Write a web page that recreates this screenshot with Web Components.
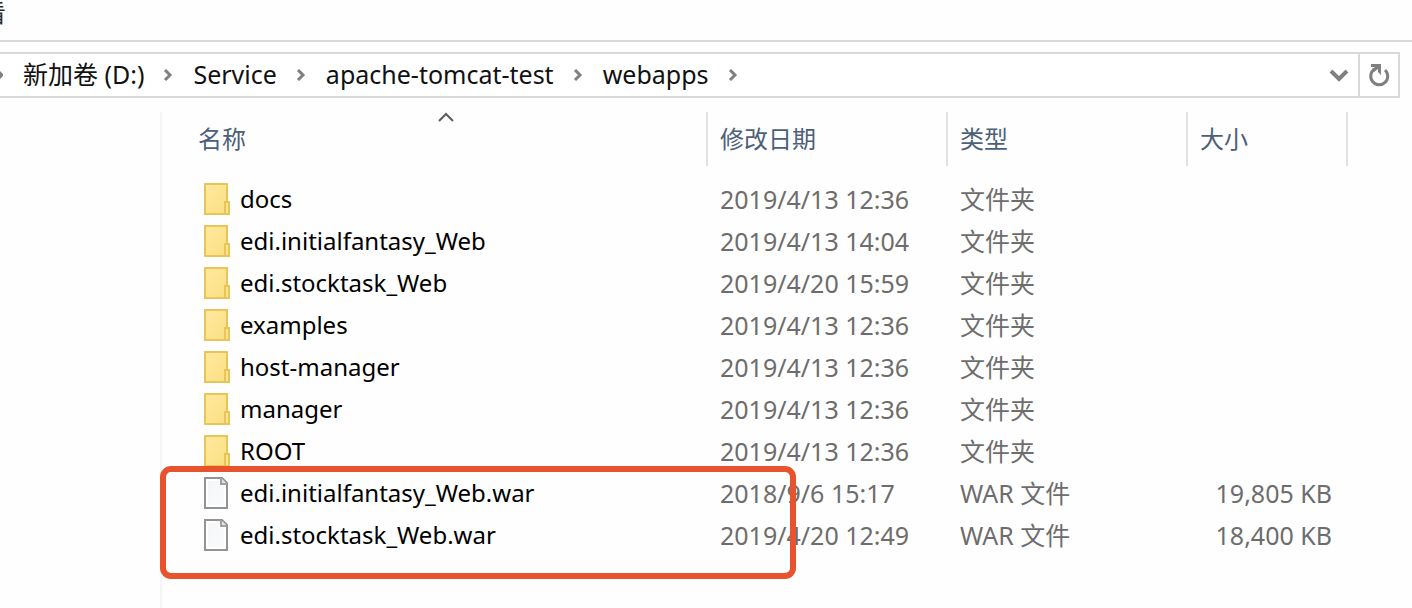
<!DOCTYPE html>
<html lang="zh-CN">
<head>
<meta charset="utf-8">
<title>webapps</title>
<style>
  html, body { height: 100%; }
  body {
    margin: 0;
    background: #fefefe;
    color: #000;
    font: 24px/32px "Noto Sans", "Noto Sans CJK SC", sans-serif;
    overflow: hidden;
  }
</style>
</head>
<body>
<explorer-window>
  <ribbon-tabs slot="ribbon"></ribbon-tabs>
  <address-bar slot="address">
    <path-crumb>新加卷 (D:)</path-crumb>
    <path-crumb>Service</path-crumb>
    <path-crumb>apache-tomcat-test</path-crumb>
    <path-crumb>webapps</path-crumb>
  </address-bar>
  <file-list></file-list>
</explorer-window>

<script>
const define = (name, html, setup) => {
  const template = document.createElement('template');
  template.innerHTML = html;
  customElements.define(name, class extends HTMLElement {
    constructor() {
      super();
      this.attachShadow({ mode: 'open' }).append(template.content.cloneNode(true));
    }
    connectedCallback() { if (setup) setup(this, this.shadowRoot); }
  });
};

define('explorer-window', `
  <style>
    :host { display: flex; flex-direction: column; height: 100%; }
    .address { padding: 10px 12px 14px 0; }
    .body { display: flex; flex: 1; min-height: 0; }
    .nav { flex: 0 0 160px; border-right: 2px solid #f5f5f5; }
    .content { flex: 1; min-width: 0; padding-left: 24px; }
  </style>
  <slot name="ribbon"></slot>
  <div class="address"><slot name="address"></slot></div>
  <div class="body">
    <div class="nav"></div>
    <main class="content"><slot></slot></main>
  </div>`);

define('ribbon-tabs', `
  <style>
    :host { display: flex; height: 40px; border-bottom: 2px solid #d9d9d9; }
    .clip { display: flex; justify-content: flex-end; align-items: flex-start; width: 6px; overflow: hidden; }
    button { flex: none; border: 0; padding: 0; background: none; color: #2b2b2b; font: inherit; line-height: 26px; }
  </style>
  <div class="clip"><button type="button">看</button></div>`);

define('path-crumb', `
  <style>
    :host { display: flex; align-items: center; gap: 19px; white-space: nowrap; }
    a { color: #111; text-decoration: none; padding-bottom: 3px; }
    svg { display: block; }
  </style>
  <a href="#"><slot></slot></a>
  <svg width="10" height="12" viewBox="0 0 10 12" fill="none" stroke="#808080" stroke-width="3"><path d="M2 1l5 5-5 5"/></svg>`);

define('address-bar', `
  <style>
    :host { display: flex; height: 42px; border: 2px solid #d9d9d9; border-left: 0; background: #fff; font-size: 25px; }
    nav { display: flex; flex: 1; align-items: center; gap: 20px; min-width: 0; overflow: hidden; }
    button { display: flex; align-items: center; justify-content: center; border: 0; padding: 0; background: none; }
    .drop { width: 38px; }
    .refresh { width: 40px; box-sizing: border-box; border-left: 2px solid #d9d9d9; }
  </style>
  <nav aria-label="路径">
    <svg width="3" height="12" viewBox="5 0 3 12" fill="none" stroke="#808080" stroke-width="3"><path d="M2 1l5 5-5 5"/></svg>
    <slot></slot>
  </nav>
  <button class="drop" type="button" aria-label="展开">
    <svg width="20" height="14" viewBox="0 0 20 14" fill="none" stroke="#808080" stroke-width="4"><path d="M2 3l8 8 8-8"/></svg>
  </button>
  <button class="refresh" type="button" aria-label="刷新">
    <svg width="22" height="24" viewBox="0 0 22 24" fill="none" stroke="#808080" stroke-width="3"><path d="M6 6.500A8.500 8.500 0 1 0 17 7"/><path d="M3 1H13V12L10 9V6L6 9L4 6L7 4H3Z" fill="#808080" stroke="none"/></svg>
  </button>`);

define('file-icon', `
  <style>
    :host { display: block; width: 26px; height: 32px; }
    svg { display: none; }
    :host([kind="folder"]) .folder, :host([kind="file"]) .file { display: block; }
  </style>
  <svg class="folder" width="26" height="32" viewBox="0 0 26 32">
    <defs><linearGradient id="f" x2="1" y2="1"><stop stop-color="#ffe9a0"/><stop offset="1" stop-color="#fadf80"/></linearGradient></defs>
    <rect x="1" y="1" width="22" height="30" fill="url(#f)" stroke="#e7c558" stroke-width="2"/>
    <rect x="21" y="19" width="4" height="12" fill="#fde58e" stroke="#e7c558" stroke-width="2"/>
  </svg>
  <svg class="file" width="26" height="32" viewBox="0 0 26 32">
    <defs><linearGradient id="p" x2="1" y2="1"><stop stop-color="#f5f6f8"/><stop offset="1" stop-color="#fafbfd"/></linearGradient></defs>
    <path d="M1 1H18L23 6V31H1Z" fill="#fff" stroke="#939393" stroke-width="2"/>
    <path d="M4 4H15V9H20V28H4Z" fill="url(#p)"/>
    <path d="M17 1V7H23" fill="#e6e6e6" stroke="#a0a0a0" stroke-width="2"/>
  </svg>`);

define('highlight-frame', `
  <style>
    :host { display: block; box-sizing: border-box; border: 6px solid #e6532d; border-radius: 11px; pointer-events: none; }
  </style>`);

const FILES = [
  ['docs', '2019/4/13 12:36'],
  ['edi.initialfantasy_Web', '2019/4/13 14:04'],
  ['edi.stocktask_Web', '2019/4/20 15:59'],
  ['examples', '2019/4/13 12:36'],
  ['host-manager', '2019/4/13 12:36'],
  ['manager', '2019/4/13 12:36'],
  ['ROOT', '2019/4/13 12:36'],
  ['edi.initialfantasy_Web.war', '2018/9/6 15:17', '19,805 KB'],
  ['edi.stocktask_Web.war', '2019/4/20 12:49', '18,400 KB'],
];

define('file-list', `
  <style>
    :host { display: block; position: relative; margin-right: 64px; }
    table { width: 100%; table-layout: fixed; border-collapse: separate; border-spacing: 0; }
    .date, .type { width: 240px; }
    .size { width: 160px; }
    th {
      position: relative; height: 54px; box-sizing: border-box; padding: 0 12px;
      border-right: 2px solid #e2e2e2; color: #4c607a; font-weight: 400; text-align: left;
    }
    .sort { position: absolute; top: 0; left: 50%; margin-left: -8px; }
    tbody::before { content: ""; display: block; height: 12px; }
    td { height: 42px; padding: 0 12px; color: #6d6d6d; font-size: 25px; white-space: nowrap; }
    td:first-child { padding-left: 18px; color: #000; font-size: 24px; }
    td:last-child { padding-right: 16px; text-align: right; }
    .name { display: flex; align-items: center; gap: 10px; }
    highlight-frame { position: absolute; top: 354px; height: 113px; left: -26px; right: 552px; }
  </style>
  <table>
    <colgroup><col><col class="date"><col class="type"><col class="size"></colgroup>
    <thead><tr>
      <th scope="col">名称<svg class="sort" width="16" height="11" viewBox="0 0 16 11" fill="none" stroke="#5c5c5c" stroke-width="2"><path d="M1 9l7-7 7 7"/></svg></th>
      <th scope="col">修改日期</th><th scope="col">类型</th><th scope="col">大小</th>
    </tr></thead>
    <tbody></tbody>
  </table>
  <highlight-frame></highlight-frame>`,
  (host, root) => {
    root.querySelector('tbody').innerHTML = FILES.map(([name, date, size]) => `
      <tr>
        <td><div class="name"><file-icon kind="${size ? 'file' : 'folder'}"></file-icon><span>${name}</span></div></td>
        <td>${date}</td>
        <td>${size ? 'WAR 文件' : '文件夹'}</td>
        <td>${size || ''}</td>
      </tr>`).join('');
  });
</script>
</body>
</html>
